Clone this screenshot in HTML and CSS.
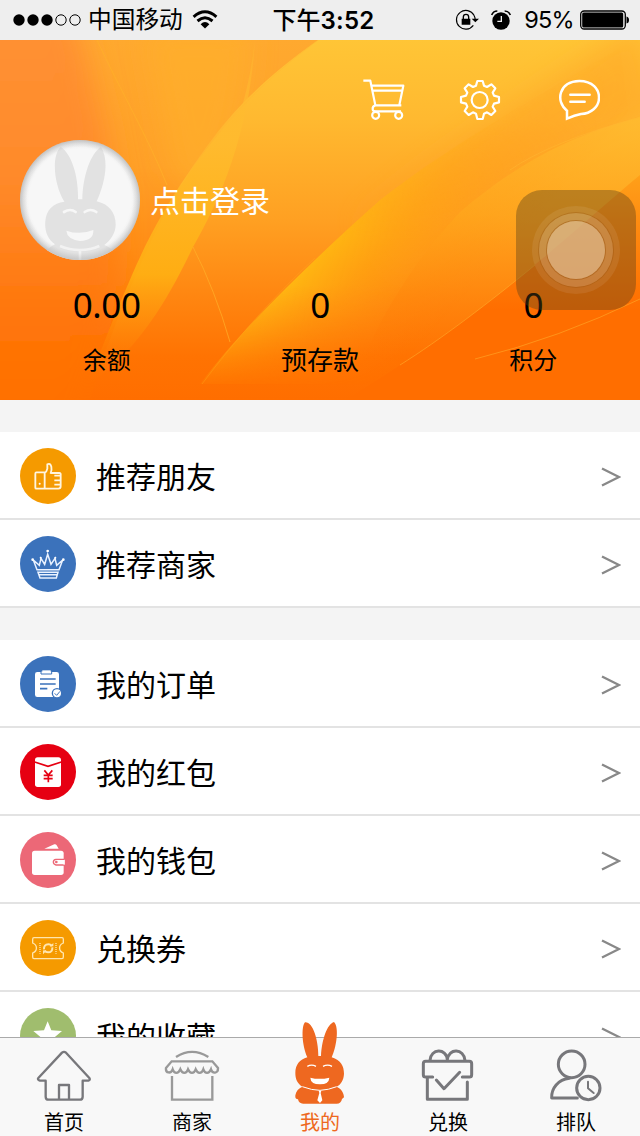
FILE: index.html
```html
<!DOCTYPE html>
<html lang="zh-CN">
<head>
<meta charset="utf-8">
<title>我的</title>
<link rel="stylesheet" href="styles.css">
</head>
<body>
<div class="screen">
  <header class="status">
    <div class="status-left">
      <svg width="68" height="14" viewBox="0 0 68 14"><g fill="#000"><circle cx="6" cy="7" r="5.7"/><circle cx="20" cy="7" r="5.7"/><circle cx="34" cy="7" r="5.7"/></g><g fill="none" stroke="#000"><circle cx="48" cy="7" r="5.2"/><circle cx="62" cy="7" r="5.2"/></g></svg>
      <span class="carrier">中国移动</span>
      <svg width="26" height="20" viewBox="0 0 26 20" fill="none" stroke="#000" stroke-width="3"><path d="M1.6 6.8Q13-3.2 24.4 6.8M5.5 11Q13 4.6 20.5 11"/><path d="M8.6 14.2Q13 10 17.4 14.2L13 18.4z" fill="#000" stroke="none"/></svg>
    </div>
    <div class="clock">下午<span class="time">3:52</span></div>
    <div class="status-right">
      <svg class="lock" width="24" height="22" viewBox="0 0 72 66"><path d="M57 19A28 28 0 1 0 55 49M57 19Q61 26 60 34" fill="none" stroke="#000" stroke-width="3.5"/><path d="M50 29h22L61 40zM20 29h26v18H20z"/><path d="M25 30v-6a8 8 0 0 1 16 0v6" fill="none" stroke="#000" stroke-width="4"/></svg>
      <svg class="alarm" width="20" height="20" viewBox="0 0 60 60"><circle cx="30" cy="33" r="26"/><path d="M2 15Q7 3 19 3M41 3Q53 3 58 15" fill="none" stroke="#000" stroke-width="5"/><path d="M31 18v16H19" fill="none" stroke="#eee" stroke-width="4"/></svg>
      <span class="percent">95%</span>
      <svg width="49" height="20" viewBox="0 0 49 20"><rect x=".7" y="1" width="44.6" height="18" rx="3.5" fill="none" stroke="#000" stroke-width="1.3"/><rect x="2.2" y="2.6" width="41" height="14.8" rx="1.5"/><path d="M46.5 6.5q2.5.5 2.5 3.5t-2.5 3.5z"/></svg>
    </div>
  </header>

  <section class="hero">
    <svg class="hero-art" viewBox="0 0 640 360" aria-hidden="true">
      <defs>
        <linearGradient id="base" x2="0" y2="1"><stop stop-color="#ffa92f"/><stop offset=".35" stop-color="#ffa028"/><stop offset=".6" stop-color="#ff8b14"/><stop offset=".85" stop-color="#ff7203"/><stop offset="1" stop-color="#ff6e00"/></linearGradient>
        <linearGradient id="side" x2="0" y2="1"><stop stop-color="#ff9233"/><stop offset=".4" stop-color="#ff8a2b"/><stop offset=".75" stop-color="#ff7407"/><stop offset="1" stop-color="#ff6e00"/></linearGradient>
        <linearGradient id="swoop" gradientUnits="userSpaceOnUse" x1="0" y1="0" x2="0" y2="360"><stop stop-color="#ffc536"/><stop offset=".22" stop-color="#ffb930"/><stop offset=".5" stop-color="#ffa022"/><stop offset=".72" stop-color="#ff8510"/><stop offset=".88" stop-color="#ff7302"/><stop offset="1" stop-color="#ff6e00"/></linearGradient>
        <linearGradient id="leaf" gradientUnits="userSpaceOnUse" x1="0" y1="0" x2="0" y2="345"><stop stop-color="#ffb932" stop-opacity=".5"/><stop offset=".3" stop-color="#ffbc2e"/><stop offset=".68" stop-color="#ffb512"/><stop offset="1" stop-color="#ff7a04" stop-opacity="0"/></linearGradient>
        <linearGradient id="band" gradientUnits="userSpaceOnUse" x1="310" y1="215" x2="415" y2="310"><stop stop-color="#ffb912"/><stop offset=".35" stop-color="#ffa60f" stop-opacity=".7"/><stop offset="1" stop-color="#ff9010" stop-opacity="0"/></linearGradient>
        <linearGradient id="bandmask" x2="0" y2="1"><stop stop-color="#000"/><stop offset=".22" stop-color="#222"/><stop offset=".55" stop-color="#fff"/><stop offset=".68" stop-color="#fff"/><stop offset=".98" stop-color="#000"/></linearGradient>
        <mask id="mid" maskUnits="userSpaceOnUse" x="0" y="0" width="640" height="360"><rect width="640" height="360" fill="url(#bandmask)"/></mask>
        <linearGradient id="right" gradientUnits="userSpaceOnUse" x1="0" y1="77" x2="0" y2="320"><stop stop-color="#ffbf31"/><stop offset=".4" stop-color="#ffa81c"/><stop offset=".75" stop-color="#ff860c"/><stop offset="1" stop-color="#ff7000" stop-opacity="0"/></linearGradient>
        <linearGradient id="corner" gradientUnits="userSpaceOnUse" x1="0" y1="120" x2="0" y2="270"><stop stop-color="#ffa61c"/><stop offset=".45" stop-color="#ff8a10"/><stop offset="1" stop-color="#ff6e00"/></linearGradient>
        <filter id="soft" x="-30%" y="-30%" width="160%" height="160%"><feGaussianBlur stdDeviation="14"/></filter>
      </defs>
      <rect width="640" height="360" fill="url(#base)"/>
      <path d="M-50-40H70C100 60 118 130 118 200S105 320 80 400H-50z" fill="url(#side)" filter="url(#soft)"/>
      <path d="M145-10H250C246 80 225 130 205 160L170 130z" fill="#ffb12c" opacity=".6" filter="url(#soft)"/>
      <path d="M318 0C230 62 205 110 180 145C150 200 115 275 90 360H640V0z" fill="url(#swoop)"/>
      <path d="M255 0C249 95 220 160 193 207C170 255 140 310 88 345Q108 290 132 235C160 170 194 120 242 67Q251 35 255 0z" fill="url(#leaf)" opacity=".8"/>
      <path d="M640-20C540 50 440 110 360 180L400 240 540 130 660 70z" fill="#ff9b20" opacity=".4" filter="url(#soft)"/>
      <path d="M620 8C540 55 450 105 380 160C315 218 240 290 200 344H500L640 160z" fill="url(#band)" mask="url(#mid)"/>
      <path d="M640 77C560 98 510 130 460 172C425 210 385 260 350 350H640z" fill="url(#right)" opacity=".6"/>
      <path d="M640 135C560 202 490 272 345 360H640z" fill="url(#corner)"/>
      <path d="M97 0C120 50 147 95 167 145M193 207Q215 250 230 302" fill="none" stroke="#ffb02a" opacity=".7"/>
      <path d="M318 0Q230 65 181 145M640 77Q550 102 510 130M535 225C490 262 440 300 400 325M640 259Q560 298 475 319" fill="none" stroke="#ffb832" opacity=".5"/>
      <path d="M315 218C275 255 235 300 202 344" fill="none" stroke="#ffad1d" opacity=".35"/>
    </svg>

    <nav class="tools">
      <svg width="42" height="42" viewBox="68 43 126 126"><g fill="none" stroke="#fff" stroke-width="6.5" stroke-linejoin="round"><path d="M69 48h21l15 74h78M94 63h95l-12 58M98 78h87M105 122q-9 2-8 12 0 6 9 6h76"/><circle cx="106" cy="152" r="10.5"/><circle cx="175" cy="152" r="10.5"/></g></svg>
      <svg width="42" height="42" viewBox="357 42 126 126"><g fill="none" stroke="#fff" stroke-width="6.5" stroke-linejoin="round"><path d="M412 48h16l4 14 9 4 13-8 12 12-8 13 4 9 15 4v16l-15 4-4 9 8 13-12 12-13-8-9 4-4 16h-16l-4-16-9-4-13 8-12-12 8-13-4-9-15-4V96l15-4 4-9-8-13 12-12 13 8 9-4z"/><circle cx="419" cy="105" r="24"/></g></svg>
      <svg width="42" height="42" viewBox="655 42 126 126"><g fill="none" stroke="#fff" stroke-width="7.5"><path d="M682 137C646 110 658 48 719 48C759 48 778 73 778 98C778 126 753 146 724 147Q705 151 682 161z"/><path d="M692 89h58M692 110h43" stroke-linecap="round"/></g></svg>
    </nav>

    <div class="profile">
      <svg class="avatar" width="120" height="120" viewBox="0 0 360 360">
        <defs>
          <radialGradient id="dish"><stop offset=".85" stop-color="#f7f7f7"/><stop offset=".94" stop-color="#eee"/><stop offset="1" stop-color="#ddd"/></radialGradient>
          <radialGradient id="rim"><stop offset=".88" stop-color="#888" stop-opacity="0"/><stop offset="1" stop-color="#888" stop-opacity=".3"/></radialGradient>
          <clipPath id="disc"><circle cx="180" cy="180" r="180"/></clipPath>
        </defs>
        <circle cx="180" cy="180" r="180" fill="url(#dish)"/>
        <g clip-path="url(#disc)">
          <path d="M133 185C101 133 94 48 122 20C158 44 176 116 174 178H187C189 106 211 42 243 20C270 65 252 136 230 184C270 193 288 222 287 256C286 281 271 302 253 315Q270 321 286 340V370H75V340Q87 320 105 313C83 299 73 272 76 243C79 208 100 190 133 185z" fill="#e2e2e2"/>
          <path d="M132 216q19-12 35 0M194 216q18-12 35 0" fill="none" stroke="#f7f7f7" stroke-width="8" stroke-linecap="round"/>
          <path d="M139 272Q180 286 220 270Q222 301 180 303Q141 297 139 272z" fill="#f7f7f7"/>
          <path d="M120 318q28 12 60 12t58-12M180 328v40" fill="none" stroke="#f2f2f2" stroke-width="8"/>
        </g>
        <circle cx="180" cy="180" r="180" fill="url(#rim)"/>
      </svg>
      <span class="login">点击登录</span>
    </div>

    <div class="stats">
      <div class="stat"><span class="amount">0.00</span><span class="caption">余额</span></div>
      <div class="stat"><span class="amount">0</span><span class="caption caption-wide">预存款</span></div>
      <div class="stat"><span class="amount">0</span><span class="caption">积分</span></div>
    </div>

  </section>

  <main class="lists">
    <div class="group">
      <div class="row">
        <svg class="badge" viewBox="60 54 168 168"><circle cx="144" cy="138" r="84" fill="#f59a00"/><g fill="none" stroke="#fff5df" stroke-width="5.5" stroke-linejoin="round"><path d="M109 127h25v49h-25q-3 0-3-3v-42q0-4 3-4zM134 129q6-3 8-13v-13q9-5 12 7 2 9-2 19h26q5 0 4 6v34q0 7-7 7h-41M163 137h18M163 151h18M163 164h18"/></g><circle cx="119" cy="161" r="3" fill="#fff"/></svg>
        <span class="label">推荐朋友</span><svg class="chev" viewBox="0 0 20 20"><path d="M1 1.5 18 10 1 18.5"/></svg>
      </div>
      <div class="row">
        <svg class="badge" viewBox="60 318 168 168"><circle cx="144" cy="402" r="84" fill="#3b72bb"/><path d="M111 419l-11-29 18 16 5-21 11 18 9-30 10 30 12-18 5 21 18-16-11 29zM114 427h60l-5 17h-49zM117 434h54" fill="none" stroke="#eaf2ff" stroke-width="4.5"/><g fill="#fff"><circle cx="98" cy="389" r="4"/><circle cx="190" cy="389" r="4"/><circle cx="143" cy="363" r="4"/><circle cx="122" cy="383" r="3"/><circle cx="166" cy="383" r="3"/></g></svg>
        <span class="label">推荐商家</span><svg class="chev" viewBox="0 0 20 20"><path d="M1 1.5 18 10 1 18.5"/></svg>
      </div>
    </div>
    <div class="group">
      <div class="row">
        <svg class="badge" viewBox="60 63 168 168"><circle cx="144" cy="147" r="84" fill="#3b72bb"/><rect x="105" y="111" width="72" height="75" rx="7" fill="#fff"/><path d="M123 108h32v9h-32z" fill="#fff" stroke="#3b72bb" stroke-width="3"/><path d="M127 106h25v8h-25z" fill="#fff"/><path d="M120 132h47M120 147h47M120 161h22" stroke="#3b72bb" stroke-width="5"/><circle cx="171" cy="175" r="14" fill="#fff" stroke="#3b72bb" stroke-width="4"/><path d="M164 175l6 6 10-12" fill="none" stroke="#3b72bb" stroke-width="3"/></svg>
        <span class="label">我的订单</span><svg class="chev" viewBox="0 0 20 20"><path d="M1 1.5 18 10 1 18.5"/></svg>
      </div>
      <div class="row">
        <svg class="badge" viewBox="60 327 168 168"><circle cx="144" cy="411" r="84" fill="#e60012"/><rect x="105" y="367" width="78" height="89" rx="8" fill="#fff"/><path d="M104 381l40 13 40-13M133 406l12 14 12-14M145 420v22M131 421h27M131 431h27" fill="none" stroke="#e60012" stroke-width="5"/></svg>
        <span class="label">我的红包</span><svg class="chev" viewBox="0 0 20 20"><path d="M1 1.5 18 10 1 18.5"/></svg>
      </div>
      <div class="row">
        <svg class="badge" viewBox="60 51 168 168"><circle cx="144" cy="135" r="84" fill="#ec6877"/><path d="M133 101l30-13q5-1 7 3l6 10z" fill="#fff"/><rect x="96" y="107" width="95" height="73" rx="8" fill="#fff"/><path d="M194 133h-26q-8 1-8 8t8 9h26" fill="#fff" stroke="#ec6877" stroke-width="4"/><path d="M192 135v14" stroke="#fff" stroke-width="3"/><circle cx="169" cy="141" r="4" fill="#ec6877"/></svg>
        <span class="label">我的钱包</span><svg class="chev" viewBox="0 0 20 20"><path d="M1 1.5 18 10 1 18.5"/></svg>
      </div>
      <div class="row">
        <svg class="badge" viewBox="60 315 168 168"><circle cx="144" cy="399" r="84" fill="#f59a00"/><g fill="none" stroke="#ffe5ae" stroke-width="4"><path d="M102 368h84q4 0 4 5v11c-15 6-15 24 0 30v12q0 5-4 5h-84q-4 0-4-5v-12c15-6 15-24 0-30v-11q0-5 4-5z"/><path d="M120 384v32M168 384v32" stroke-dasharray="3 3"/><path d="M132 403q-1-15 13-15 8 0 10 6M157 397q1 15-13 15-7 0-10-6" stroke-width="6"/></g><path d="M149 394h11v-10zM129 406v12l9-9z" fill="#ffe5ae"/></svg>
        <span class="label">兑换券</span><svg class="chev" viewBox="0 0 20 20"><path d="M1 1.5 18 10 1 18.5"/></svg>
      </div>
      <div class="row">
        <svg class="badge" viewBox="60 54 168 168"><circle cx="144" cy="138" r="84" fill="#a0bd6e"/><path d="M143 94l11 27 32 2-24 20 8 31-27-17-27 17 8-31-24-20 32-2z" fill="#fff"/></svg>
        <span class="label">我的收藏</span><svg class="chev" viewBox="0 0 20 20"><path d="M1 1.5 18 10 1 18.5"/></svg>
      </div>
    </div>
  </main>

  <nav class="tabs">
    <div class="tab">
      <svg width="60" height="56" viewBox="102 174 180 168" fill="none" stroke="#77777b" stroke-width="7" stroke-linejoin="round"><path d="M186 188q6-5 12 0l70 76q4 6-3 8h-17v48q0 9-9 9h-93q-9 0-9-9v-48h-17q-9-3-5-8zM177 327v-42h30v42"/></svg>
      <span>首页</span>
    </div>
    <div class="tab">
      <svg width="60" height="56" viewBox="486 174 180 168" fill="none" stroke="#999" stroke-width="7"><path d="M528 201Q576 170 625 201M516 258v71h121v-71M515 214h122l17 20c1 17-17 18-21 4-6 14-18 14-23 0-5 14-17 14-23 0-5 14-17 14-23 0-5 14-17 14-23 0-6 14-18 14-23 0-5 14-22 12-20-4z"/></svg>
      <span>商家</span>
    </div>
    <div class="tab tab-active">
      <svg width="60" height="84" viewBox="210 60 180 252"><path d="M262 172C246 137 243 80 255 67C279 65 295 121 295 168H303C305 121 321 72 342 66C359 83 348 146 335 172C363 181 372 199 372 221C371 240 363 253 350 260C365 266 372 281 372 292L366 297Q363 312 348 311H251Q237 312 234 298C225 297 226 291 226 286C228 273 236 265 247 260C232 251 226 237 226 219C226 194 239 179 262 172z" fill="#ee6820"/><path d="M262 199q13-7 26 0M309 199q14-7 27 0" fill="none" stroke="#fff" stroke-width="4"/><path d="M271 233q27 7 57 0-1 20-28 20-28 0-29-20z" fill="#fff"/><path d="M247 260Q276 271 300 271Q325 270 350 260" fill="none" stroke="#fff" stroke-width="3"/><path d="M296 272h8l-2 7 5 22-7 8-8-8 6-22z" fill="#fff"/></svg>
      <span>我的</span>
    </div>
    <div class="tab">
      <svg width="60" height="56" viewBox="24 144 180 168" fill="none" stroke="#77777b" stroke-width="9" stroke-linecap="round" stroke-linejoin="round"><path d="M60 181c2-36 49-38 52-2 4-36 50-34 53 2M68 231H47q-7 0-7-7v-33q0-7 7-7h131q7 0 7 7v33q0 7-7 7h-21M52 234v64h120v-52"/><path d="M79 240l23 26 47-49"/></svg>
      <span>兑换</span>
    </div>
    <div class="tab">
      <svg width="60" height="56" viewBox="408 144 180 168" fill="none" stroke="#77777b" stroke-width="9" stroke-linecap="round" stroke-linejoin="round"><circle cx="485" cy="193" r="40"/><path d="M478 235C444 239 424 265 425 294H502"/><circle cx="535" cy="264" r="35"/><path d="M534 245v20l17 14" stroke-width="6"/></svg>
      <span>排队</span>
    </div>
  </nav>
  <div class="assist"><div class="assist-ring"><div class="assist-mid"><div class="assist-core"></div></div></div></div>
</div>
</body>
</html>
```
FILE: styles.css
```css
* { box-sizing: border-box; }
body { margin: 0; font-family: Inter, "Noto Sans CJK SC", sans-serif; color: #000; }
svg { display: block; flex: none; }
.screen { position: relative; width: 640px; height: 1136px; overflow: hidden; background: #f4f4f4; }
.status { height: 40px; background: #eee; display: grid; grid-template-columns: 1fr auto 1fr; align-items: center; padding: 0 11px 0 13px; line-height: 42px; }
.status-left, .status-right { display: flex; align-items: center; height: 40px; }
.carrier { font-size: 23.7px; margin: 0 9px 0 7px; }
.clock { font-size: 24px; font-weight: 500; white-space: nowrap; padding-left: 5px; height: 40px; }
.time { font-weight: 600; letter-spacing: .2px; }
.status-right { justify-content: flex-end; }
.lock { margin-right: 12px; }
.alarm { margin-right: 13px; }
.percent { font-size: 23.5px; margin-right: 6px; letter-spacing: -.7px; }
.hero { position: relative; height: 360px; padding-top: 39px; display: flex; flex-direction: column; }
.hero-art { position: absolute; inset: 0; width: 640px; height: 360px; }
.tools, .profile, .stats { position: relative; }
.tools { display: flex; justify-content: flex-end; padding-right: 40px; height: 42px; }
.tools svg { margin-left: 57px; }
.tools svg:nth-child(2) { margin-left: 54px; }
.profile { display: flex; align-items: center; margin-top: 19px; padding-left: 20px; height: 120px; }
.login { margin-left: 10px; padding-top: 2px; font-size: 30px; line-height: 40px; color: #fff; }
.stats { display: grid; grid-template-columns: repeat(3, 1fr); margin-top: 25px; }
.stat { display: flex; flex-direction: column; align-items: center; }
.amount { font-family: "Noto Sans", sans-serif; font-size: 35px; line-height: 40px; letter-spacing: -.4px; }
.caption { font-size: 24px; line-height: 36px; margin-top: 18px; }
.caption-wide { font-size: 26px; }
.group { margin-top: 32px; }
.row { height: 88px; background: #fff; border-bottom: 2px solid #e3e3e3; display: flex; align-items: center; padding: 2px 19px 0 20px; }
.badge { width: 56px; height: 56px; }
.label { flex: 1; font-size: 30px; line-height: 44px; padding-top: 2px; margin-left: 20px; }
.chev { width: 20px; height: 20px; fill: none; stroke: #888; stroke-width: 2.3; margin-top: 2px; }
.tabs { position: absolute; left: 0; right: 0; bottom: 0; height: 99px; background: #f8f8f8; border-top: 1px solid #aaa; display: grid; grid-template-columns: repeat(5, 1fr); }
.tab { display: flex; flex-direction: column; align-items: center; justify-content: flex-end; height: 98px; font-size: 20px; }
.tab span { height: 32px; line-height: 38px; }
.tab-active { color: #ee6820; }
.assist { position: absolute; left: 516px; top: 190px; width: 120px; height: 120px; border-radius: 26px; background: rgba(90, 65, 25, .4); display: flex; align-items: center; justify-content: center; }
.assist-ring, .assist-mid, .assist-core { border-radius: 50%; display: flex; align-items: center; justify-content: center; }
.assist-ring { width: 88px; height: 88px; background: rgba(255, 255, 255, .08); }
.assist-mid { width: 74px; height: 74px; background: rgba(255, 255, 255, .13); box-shadow: 0 0 0 1px rgba(150, 75, 0, .3); }
.assist-core { width: 58px; height: 58px; background: rgba(230, 196, 155, .55); box-shadow: 0 0 0 1px rgba(150, 75, 0, .4); }
```
